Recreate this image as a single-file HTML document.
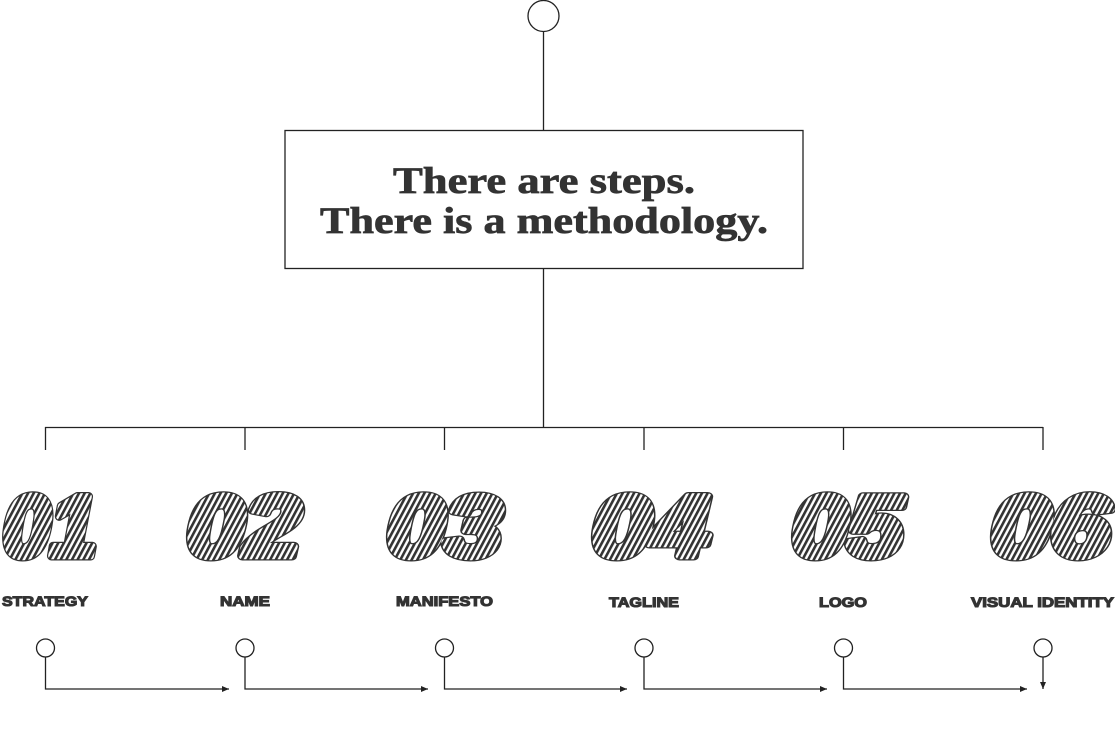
<!DOCTYPE html>
<html><head><meta charset="utf-8"><style>
html,body{margin:0;padding:0;background:#fff;width:1115px;height:750px;overflow:hidden}
</style></head><body>
<svg width="1115" height="750" viewBox="0 0 1115 750" xmlns="http://www.w3.org/2000/svg">
<defs>
<pattern id="st" width="5" height="10" patternUnits="userSpaceOnUse" patternTransform="rotate(28)">
<rect width="5" height="10" fill="#fff"/>
<rect width="2.6" height="10" fill="#333"/>
</pattern>
<marker id="ar" markerWidth="8" markerHeight="8" refX="7" refY="4" orient="auto" markerUnits="userSpaceOnUse">
<path d="M0,1 L7,4 L0,7 Z" fill="#222"/>
</marker>
<g id="nums">
<text x="3" y="556" textLength="94" lengthAdjust="spacingAndGlyphs">01</text>
<text x="187" y="556" textLength="114" lengthAdjust="spacingAndGlyphs">02</text>
<text x="387" y="556" textLength="115" lengthAdjust="spacingAndGlyphs">03</text>
<text x="592" y="556" textLength="118" lengthAdjust="spacingAndGlyphs">04</text>
<text x="792" y="556" textLength="111" lengthAdjust="spacingAndGlyphs">05</text>
<text x="991" y="556" textLength="119" lengthAdjust="spacingAndGlyphs">06</text>
</g>
</defs>
<g stroke="#222" stroke-width="1.3" fill="none">
<circle cx="543.5" cy="16" r="15.5"/>
<line x1="543.5" y1="31.5" x2="543.5" y2="130"/>
<rect x="285" y="130.5" width="518" height="138"/>
<line x1="543.5" y1="269" x2="543.5" y2="427.5"/>
<line x1="45" y1="427.5" x2="1043" y2="427.5"/>
<line x1="45.5" y1="427" x2="45.5" y2="450"/>
<line x1="245" y1="427" x2="245" y2="450"/>
<line x1="444.5" y1="427" x2="444.5" y2="450"/>
<line x1="644" y1="427" x2="644" y2="450"/>
<line x1="843.5" y1="427" x2="843.5" y2="450"/>
<line x1="1043" y1="427" x2="1043" y2="450"/>
<circle cx="45.5" cy="648" r="9"/><circle cx="245" cy="648" r="9"/><circle cx="444.5" cy="648" r="9"/>
<circle cx="644" cy="648" r="9"/><circle cx="843.5" cy="648" r="9"/><circle cx="1043" cy="648" r="9"/>
<polyline points="45.5,657 45.5,689 229,689" marker-end="url(#ar)"/>
<polyline points="245,657 245,689 428,689" marker-end="url(#ar)"/>
<polyline points="444.5,657 444.5,689 627,689" marker-end="url(#ar)"/>
<polyline points="644,657 644,689 827,689" marker-end="url(#ar)"/>
<polyline points="843.5,657 843.5,689 1027,689" marker-end="url(#ar)"/>
<line x1="1043" y1="657" x2="1043" y2="689" marker-end="url(#ar)"/>
</g>
<g font-family="'Liberation Serif',serif" font-weight="bold" font-size="37" fill="#333" stroke="#333" stroke-width="0.7" text-anchor="middle">
<text x="544" y="193" textLength="302" lengthAdjust="spacingAndGlyphs">There are steps.</text>
<text x="544" y="233" textLength="448" lengthAdjust="spacingAndGlyphs">There is a methodology.</text>
</g>
<g font-family="'Liberation Sans',sans-serif" font-weight="bold" font-style="italic" font-size="86" stroke-linejoin="round">
<use href="#nums" fill="#333" stroke="#333" stroke-width="9"/>
<use href="#nums" fill="url(#st)" stroke="url(#st)" stroke-width="6.5"/>
</g>
<g font-family="'Liberation Sans',sans-serif" font-weight="bold" font-size="14" fill="#333" stroke="#333" stroke-width="1.1">
<text x="2" y="606" textLength="86" lengthAdjust="spacingAndGlyphs">STRATEGY</text>
<text x="220" y="606" textLength="50" lengthAdjust="spacingAndGlyphs">NAME</text>
<text x="396" y="606" textLength="97" lengthAdjust="spacingAndGlyphs">MANIFESTO</text>
<text x="609" y="607" textLength="70" lengthAdjust="spacingAndGlyphs">TAGLINE</text>
<text x="819" y="607" textLength="48" lengthAdjust="spacingAndGlyphs">LOGO</text>
<text x="971" y="607" textLength="143" lengthAdjust="spacingAndGlyphs">VISUAL IDENTITY</text>
</g>
</svg>
</body></html>
